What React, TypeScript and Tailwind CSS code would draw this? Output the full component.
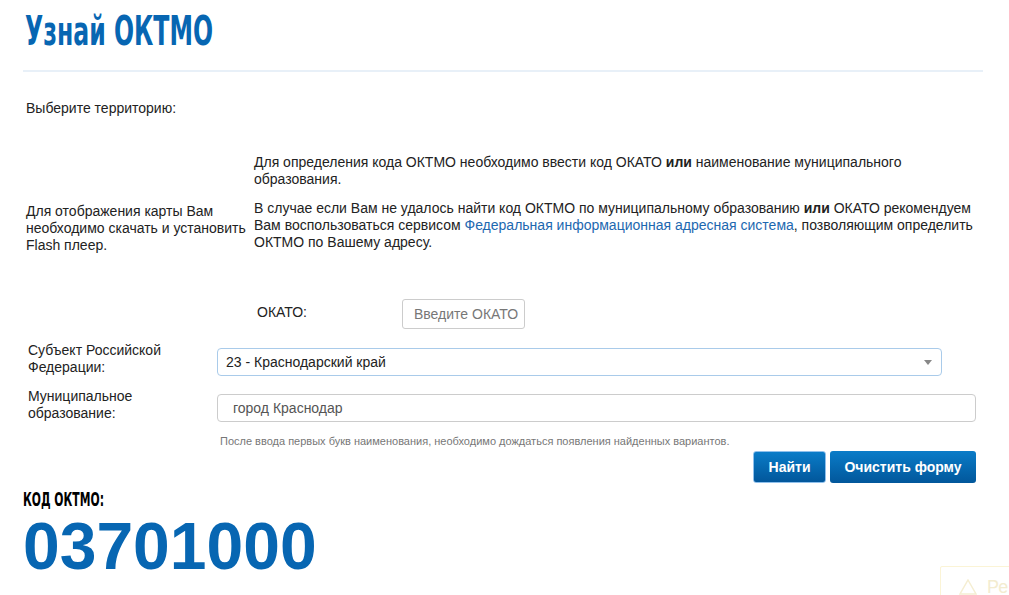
import React from 'react'

const cond = { fontFamily: '"DejaVu Sans Condensed", "DejaVu Sans", sans-serif' }

export default function App() {
  return (
    <div className="relative w-[1009px] h-[595px] overflow-hidden bg-white text-[14px] leading-[17px] text-[#222]" style={{ fontFamily: '"Liberation Sans", Arial, sans-serif' }}>
      <div className="pl-[23px] w-[983px]">
        <div className="h-[70px] pt-[7px] pl-[2px]">
          <h1 className="inline-block origin-left scale-x-[0.64] text-[41px] leading-[48px] font-bold text-[#0766b2] whitespace-nowrap" style={cond}>
            Узнай ОКТМО
          </h1>
        </div>
        <div className="h-[2px] bg-[#e8f0f8]" />

        <p className="pl-[3px] mt-[28px]">Выберите территорию:</p>

        <div className="flex mt-[37px]">
          <div className="w-[231px] pl-[3px] pt-[49px]">
            <p>Для отображения карты Вам необходимо скачать и установить Flash плеер.</p>
          </div>
          <div className="w-[724px]">
            <p>
              Для определения кода ОКТМО необходимо ввести код ОКАТО <b>или</b> наименование муниципального образования.
            </p>
            <p className="mt-[12px]">
              В случае если Вам не удалось найти код ОКТМО по муниципальному образованию <b>или</b> ОКАТО рекомендуем Вам воспользоваться сервисом{' '}
              <a href="#" className="text-[#1d68b0]">Федеральная информационная адресная система</a>, позволяющим определить ОКТМО по Вашему адресу.
            </p>
          </div>
        </div>

        <div className="flex items-start mt-[45px] pl-[234px]">
          <span className="w-[145px] pt-[5px]">ОКАТО:</span>
          <div className="h-[30px] w-[123px] border border-[#ccc] rounded-[3px] flex items-center px-[11px] text-[#777] whitespace-nowrap">
            Введите ОКАТО
          </div>
        </div>

        <div className="flex items-start mt-[13px]">
          <div className="w-[194px] pl-[5px]">Субъект Российской Федерации:</div>
          <div className="mt-[6px] h-[28px] w-[725px] border border-[#a9cbea] rounded-[4px] flex items-center justify-between px-[8px] text-[#222]">
            <span>23 - Краснодарский край</span>
            <span className="w-0 h-0 border-l-[4px] border-r-[4px] border-t-[5px] border-l-transparent border-r-transparent border-t-[#888] mr-[1px]" />
          </div>
        </div>

        <div className="flex items-start mt-[12px]">
          <div className="w-[194px] pl-[5px]">Муниципальное образование:</div>
          <div className="mt-[6px] h-[28px] w-[759px] border border-[#ccc] rounded-[4px] flex items-center px-[15px] text-[#555]">
            город Краснодар
          </div>
        </div>

        <p className="pl-[197px] mt-[12px] text-[11px] leading-[14px] text-[#777]">
          После ввода первых букв наименования, необходимо дождаться появления найденных вариантов.
        </p>

        <div className="flex justify-end gap-[4px] mt-[3px] w-[953px]">
          <button className="h-[32px] w-[73px] rounded-[3px] border border-[#8fc0ec] bg-gradient-to-b from-[#0b7cc8] to-[#02579b] text-white font-bold">
            Найти
          </button>
          <button className="h-[32px] w-[146px] rounded-[3px] bg-gradient-to-b from-[#0b7cc8] to-[#02579b] text-white font-bold">
            Очистить форму
          </button>
        </div>

        <div className="mt-[4px] inline-block origin-left scale-x-[0.6] text-[20px] leading-[24px] font-bold text-black whitespace-nowrap" style={cond}>
          КОД ОКТМО:
        </div>
        <div className="mt-[3px] text-[66px] leading-[64px] font-bold text-[#0766b2]">03701000</div>
      </div>

      <div className="absolute left-[940px] top-[566px] w-[120px] h-[60px] border border-[#fbf4d6] rounded-[2px] flex items-start pt-[12px] pl-[18px] gap-[10px] text-[#f3ecd0]">
        <svg width="18" height="16" viewBox="0 0 18 16">
          <path d="M9 1 L17 15 H1 Z" fill="none" stroke="#f5eed2" strokeWidth="1.5" />
        </svg>
        <span className="text-[18px]">Ре</span>
      </div>
    </div>
  )
}
